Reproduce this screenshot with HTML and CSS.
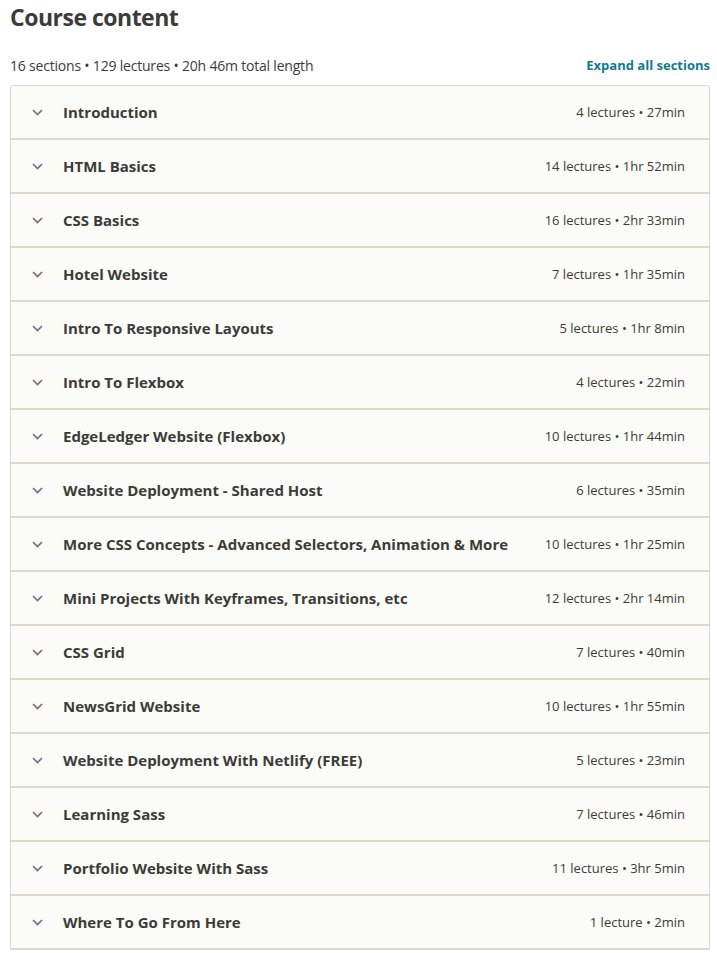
FILE: index.html
```html
<!DOCTYPE html>
<html lang="en">
<head>
<meta charset="utf-8">
<title>Course content</title>
<link rel="stylesheet" href="styles.css">
</head>
<body>
<div class="page">
  <h2 class="title">Course content</h2>
  <div class="meta-row">
    <span class="meta">16 sections • 129 lectures • 20h 46m total length</span>
    <a class="expand" href="#">Expand all sections</a>
  </div>
  <div class="accordion">
    <div class="row"><span class="chev"><svg width="11" height="7" viewBox="0 0 11 7"><path d="M1 1l4.5 4.5L10 1" fill="none" stroke="currentColor" stroke-width="1.6"/></svg></span><span class="name">Introduction</span><span class="info">4 lectures • 27min</span></div>
    <div class="row"><span class="chev"><svg width="11" height="7" viewBox="0 0 11 7"><path d="M1 1l4.5 4.5L10 1" fill="none" stroke="currentColor" stroke-width="1.6"/></svg></span><span class="name">HTML Basics</span><span class="info">14 lectures • 1hr 52min</span></div>
    <div class="row"><span class="chev"><svg width="11" height="7" viewBox="0 0 11 7"><path d="M1 1l4.5 4.5L10 1" fill="none" stroke="currentColor" stroke-width="1.6"/></svg></span><span class="name">CSS Basics</span><span class="info">16 lectures • 2hr 33min</span></div>
    <div class="row"><span class="chev"><svg width="11" height="7" viewBox="0 0 11 7"><path d="M1 1l4.5 4.5L10 1" fill="none" stroke="currentColor" stroke-width="1.6"/></svg></span><span class="name">Hotel Website</span><span class="info">7 lectures • 1hr 35min</span></div>
    <div class="row"><span class="chev"><svg width="11" height="7" viewBox="0 0 11 7"><path d="M1 1l4.5 4.5L10 1" fill="none" stroke="currentColor" stroke-width="1.6"/></svg></span><span class="name">Intro To Responsive Layouts</span><span class="info">5 lectures • 1hr 8min</span></div>
    <div class="row"><span class="chev"><svg width="11" height="7" viewBox="0 0 11 7"><path d="M1 1l4.5 4.5L10 1" fill="none" stroke="currentColor" stroke-width="1.6"/></svg></span><span class="name">Intro To Flexbox</span><span class="info">4 lectures • 22min</span></div>
    <div class="row"><span class="chev"><svg width="11" height="7" viewBox="0 0 11 7"><path d="M1 1l4.5 4.5L10 1" fill="none" stroke="currentColor" stroke-width="1.6"/></svg></span><span class="name">EdgeLedger Website (Flexbox)</span><span class="info">10 lectures • 1hr 44min</span></div>
    <div class="row"><span class="chev"><svg width="11" height="7" viewBox="0 0 11 7"><path d="M1 1l4.5 4.5L10 1" fill="none" stroke="currentColor" stroke-width="1.6"/></svg></span><span class="name">Website Deployment - Shared Host</span><span class="info">6 lectures • 35min</span></div>
    <div class="row"><span class="chev"><svg width="11" height="7" viewBox="0 0 11 7"><path d="M1 1l4.5 4.5L10 1" fill="none" stroke="currentColor" stroke-width="1.6"/></svg></span><span class="name">More CSS Concepts - Advanced Selectors, Animation &amp; More</span><span class="info">10 lectures • 1hr 25min</span></div>
    <div class="row"><span class="chev"><svg width="11" height="7" viewBox="0 0 11 7"><path d="M1 1l4.5 4.5L10 1" fill="none" stroke="currentColor" stroke-width="1.6"/></svg></span><span class="name">Mini Projects With Keyframes, Transitions, etc</span><span class="info">12 lectures • 2hr 14min</span></div>
    <div class="row"><span class="chev"><svg width="11" height="7" viewBox="0 0 11 7"><path d="M1 1l4.5 4.5L10 1" fill="none" stroke="currentColor" stroke-width="1.6"/></svg></span><span class="name">CSS Grid</span><span class="info">7 lectures • 40min</span></div>
    <div class="row"><span class="chev"><svg width="11" height="7" viewBox="0 0 11 7"><path d="M1 1l4.5 4.5L10 1" fill="none" stroke="currentColor" stroke-width="1.6"/></svg></span><span class="name">NewsGrid Website</span><span class="info">10 lectures • 1hr 55min</span></div>
    <div class="row"><span class="chev"><svg width="11" height="7" viewBox="0 0 11 7"><path d="M1 1l4.5 4.5L10 1" fill="none" stroke="currentColor" stroke-width="1.6"/></svg></span><span class="name">Website Deployment With Netlify (FREE)</span><span class="info">5 lectures • 23min</span></div>
    <div class="row"><span class="chev"><svg width="11" height="7" viewBox="0 0 11 7"><path d="M1 1l4.5 4.5L10 1" fill="none" stroke="currentColor" stroke-width="1.6"/></svg></span><span class="name">Learning Sass</span><span class="info">7 lectures • 46min</span></div>
    <div class="row"><span class="chev"><svg width="11" height="7" viewBox="0 0 11 7"><path d="M1 1l4.5 4.5L10 1" fill="none" stroke="currentColor" stroke-width="1.6"/></svg></span><span class="name">Portfolio Website With Sass</span><span class="info">11 lectures • 3hr 5min</span></div>
    <div class="row"><span class="chev"><svg width="11" height="7" viewBox="0 0 11 7"><path d="M1 1l4.5 4.5L10 1" fill="none" stroke="currentColor" stroke-width="1.6"/></svg></span><span class="name">Where To Go From Here</span><span class="info">1 lecture • 2min</span></div>
  </div>
</div>
</body>
</html>
```
FILE: styles.css
```css
html, body {
  margin: 0;
  padding: 0;
  background: #ffffff;
}

body {
  font-family: "Open Sans", "Noto Sans", "Liberation Sans", sans-serif;
  color: #3c3b37;
}

.page {
  width: 700px;
  padding-left: 10px;
}

.title {
  margin: 0;
  font-size: 23px;
  line-height: 34px;
  font-weight: 700;
  letter-spacing: -0.5px;
  color: #3c3b37;
}

.meta-row {
  display: flex;
  justify-content: space-between;
  align-items: center;
  height: 20px;
  margin-top: 21px;
  margin-bottom: 10px;
}

.meta {
  font-size: 14px;
  letter-spacing: -0.2px;
}

.expand {
  font-size: 13px;
  font-weight: 700;
  letter-spacing: 0;
  color: #0f7c90;
  text-decoration: none;
}

.accordion {
  border: 1px solid #dcdacb;
  border-bottom: none;
  border-radius: 3px 3px 0 0;
  overflow: hidden;
}

.row {
  display: flex;
  align-items: center;
  height: 52px;
  background: #fbfbf8;
  border-bottom: 2px solid #dcdacb;
  padding: 0 24px 0 21px;
}

.chev {
  width: 31px;
  display: flex;
  align-items: center;
  color: #686f7a;
}

.chev svg {
  display: block;
}

.name {
  flex: 1;
  font-size: 15px;
  font-weight: 700;
  letter-spacing: 0;
  color: #3c3b37;
}

.info {
  font-size: 13px;
  letter-spacing: 0;
  color: #3c3b37;
}
```
